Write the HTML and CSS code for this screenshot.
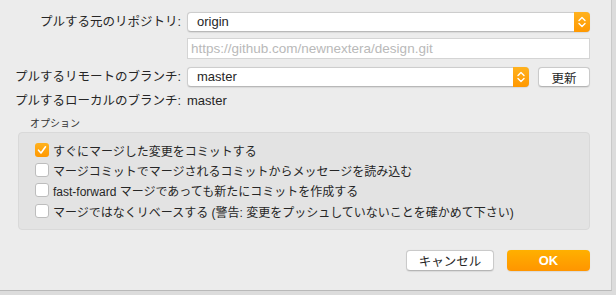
FILE: index.html
```html
<!DOCTYPE html>
<html>

<head>
  <meta charset="utf-8">
  <link rel="stylesheet" href="styles.css">
</head>

<body>
  <div class="dialog">
    <div class="form-grid">
      <label class="field-label">プルする元のリポジトリ:</label>
      <div class="select">
        <span class="select-value">origin</span>
        <span class="stepper">
          <svg width="16" height="20" viewBox="0 0 16 20">
            <path d="M5 8.5 L8 5.5 L11 8.5" fill="none" stroke="#fff" stroke-width="1.4" stroke-linecap="round" stroke-linejoin="round"/>
            <path d="M5 11.5 L8 14.5 L11 11.5" fill="none" stroke="#fff" stroke-width="1.4" stroke-linecap="round" stroke-linejoin="round"/>
          </svg>
        </span>
      </div>

      <span></span>
      <input class="url-input" type="text" placeholder="https://github.com/newnextera/design.git">

      <label class="field-label">プルするリモートのブランチ:</label>
      <div class="branch-row">
        <div class="select">
          <span class="select-value">master</span>
          <span class="stepper">
            <svg width="16" height="20" viewBox="0 0 16 20">
              <path d="M5 8.5 L8 5.5 L11 8.5" fill="none" stroke="#fff" stroke-width="1.4" stroke-linecap="round" stroke-linejoin="round"/>
              <path d="M5 11.5 L8 14.5 L11 11.5" fill="none" stroke="#fff" stroke-width="1.4" stroke-linecap="round" stroke-linejoin="round"/>
            </svg>
          </span>
        </div>
        <button class="btn refresh-btn">更新</button>
      </div>

      <label class="field-label local-label">プルするローカルのブランチ:</label>
      <span class="plain-value">master</span>
    </div>

    <div class="group-title">オプション</div>
    <div class="options-box">
      <label class="option">
        <span class="checkbox checked">
          <svg width="14" height="14" viewBox="0 0 14 14">
            <path d="M3.5 7.2 L6 10 L10.5 3.8" fill="none" stroke="#fff" stroke-width="1.6" stroke-linecap="round" stroke-linejoin="round"/>
          </svg>
        </span>
        すぐにマージした変更をコミットする
      </label>
      <label class="option">
        <span class="checkbox"></span>
        マージコミットでマージされるコミットからメッセージを読み込む
      </label>
      <label class="option">
        <span class="checkbox"></span>
        fast-forward マージであっても新たにコミットを作成する
      </label>
      <label class="option">
        <span class="checkbox"></span>
        マージではなくリベースする (警告: 変更をプッシュしていないことを確かめて下さい)
      </label>
    </div>

    <div class="actions">
      <button class="btn cancel-btn">キャンセル</button>
      <button class="btn ok-btn">OK</button>
    </div>
  </div>
</body>

</html>
```

FILE: styles.css
```css
body {
  margin: 0;
  background-color: #dcdcdc;
  font-family: 'Liberation Sans', 'Noto Sans CJK JP', sans-serif;
  font-size: 12.5px;
  color: #262626;
}

.dialog {
  box-sizing: border-box;
  width: 612px;
  height: 291px;
  padding: 12px 21px 0 0;
  background-color: #ececec;
  border-right: 1px solid #c9c9c9;
  border-bottom: 1px solid #b9b9b9;
}

.form-grid {
  display: grid;
  grid-template-columns: 181px 1fr;
  column-gap: 6px;
  align-items: center;
}

.field-label {
  text-align: right;
  white-space: nowrap;
  line-height: 20px;
}

.select {
  display: flex;
  align-items: center;
  height: 20px;
  box-sizing: border-box;
  background-color: #fff;
  border: 1px solid #cdcdcd;
  border-bottom-color: #b8b8b8;
  border-radius: 4px;
  box-shadow: 0 0.5px 1px rgba(0, 0, 0, 0.08);
}

.select-value {
  flex: 1;
  padding-left: 9px;
  font-size: 13px;
  line-height: 18px;
}

.stepper {
  display: flex;
  width: 16px;
  height: 20px;
  margin: -1px -1px -1px 0;
  background: linear-gradient(#ffb21f, #ff9800);
  border-radius: 0 4px 4px 0;
}

.url-input {
  box-sizing: border-box;
  height: 21px;
  margin: 6px 0 8px;
  padding: 0 0 0 3px;
  border: 1px solid #d4d4d4;
  background-color: #fff;
  font-family: inherit;
  font-size: 13.5px;
  outline: none;
}

.url-input::placeholder {
  color: #b9b9b9;
}

.branch-row {
  display: flex;
  gap: 9px;
}

.branch-row .select {
  flex: 1;
}

.plain-value {
  font-size: 13px;
  line-height: 20px;
  margin-top: 4px;
}

.local-label {
  margin-top: 4px;
}

.btn {
  box-sizing: border-box;
  height: 21px;
  padding: 0;
  border: 1px solid #cacaca;
  border-bottom-color: #b5b5b5;
  border-radius: 4px;
  background-color: #fff;
  font-family: inherit;
  font-size: 12.5px;
  color: #262626;
  box-shadow: 0 0.5px 1px rgba(0, 0, 0, 0.08);
}

.refresh-btn {
  width: 52px;
  height: 20px;
}

.group-title {
  margin: 6px 0 0 30px;
  font-size: 10px;
  line-height: 14px;
  color: #333;
}

.options-box {
  box-sizing: border-box;
  margin: 1px 0 0 18px;
  height: 98px;
  padding: 7px 0 0 16px;
  background-color: #e3e3e3;
  border: 1px solid #d9d9d9;
  border-radius: 4px;
  font-size: 12px;
}

.option {
  display: flex;
  align-items: center;
  gap: 4px;
  height: 20px;
  white-space: nowrap;
}

.option:last-child {
  margin-top: 1px;
}

.checkbox {
  display: flex;
  box-sizing: border-box;
  width: 14px;
  height: 14px;
  background-color: #fff;
  border: 1px solid #bdbdbd;
  border-radius: 3px;
}

.checkbox.checked {
  border: none;
  background: linear-gradient(#ffb21f, #ff9800);
}

.actions {
  display: flex;
  justify-content: flex-end;
  gap: 13px;
  margin-top: 20px;
}

.cancel-btn {
  width: 88px;
}

.ok-btn {
  width: 83px;
  border: none;
  background: linear-gradient(#ffb000, #ff9500);
  color: #fff;
  font-size: 13px;
  font-weight: bold;
}
```
